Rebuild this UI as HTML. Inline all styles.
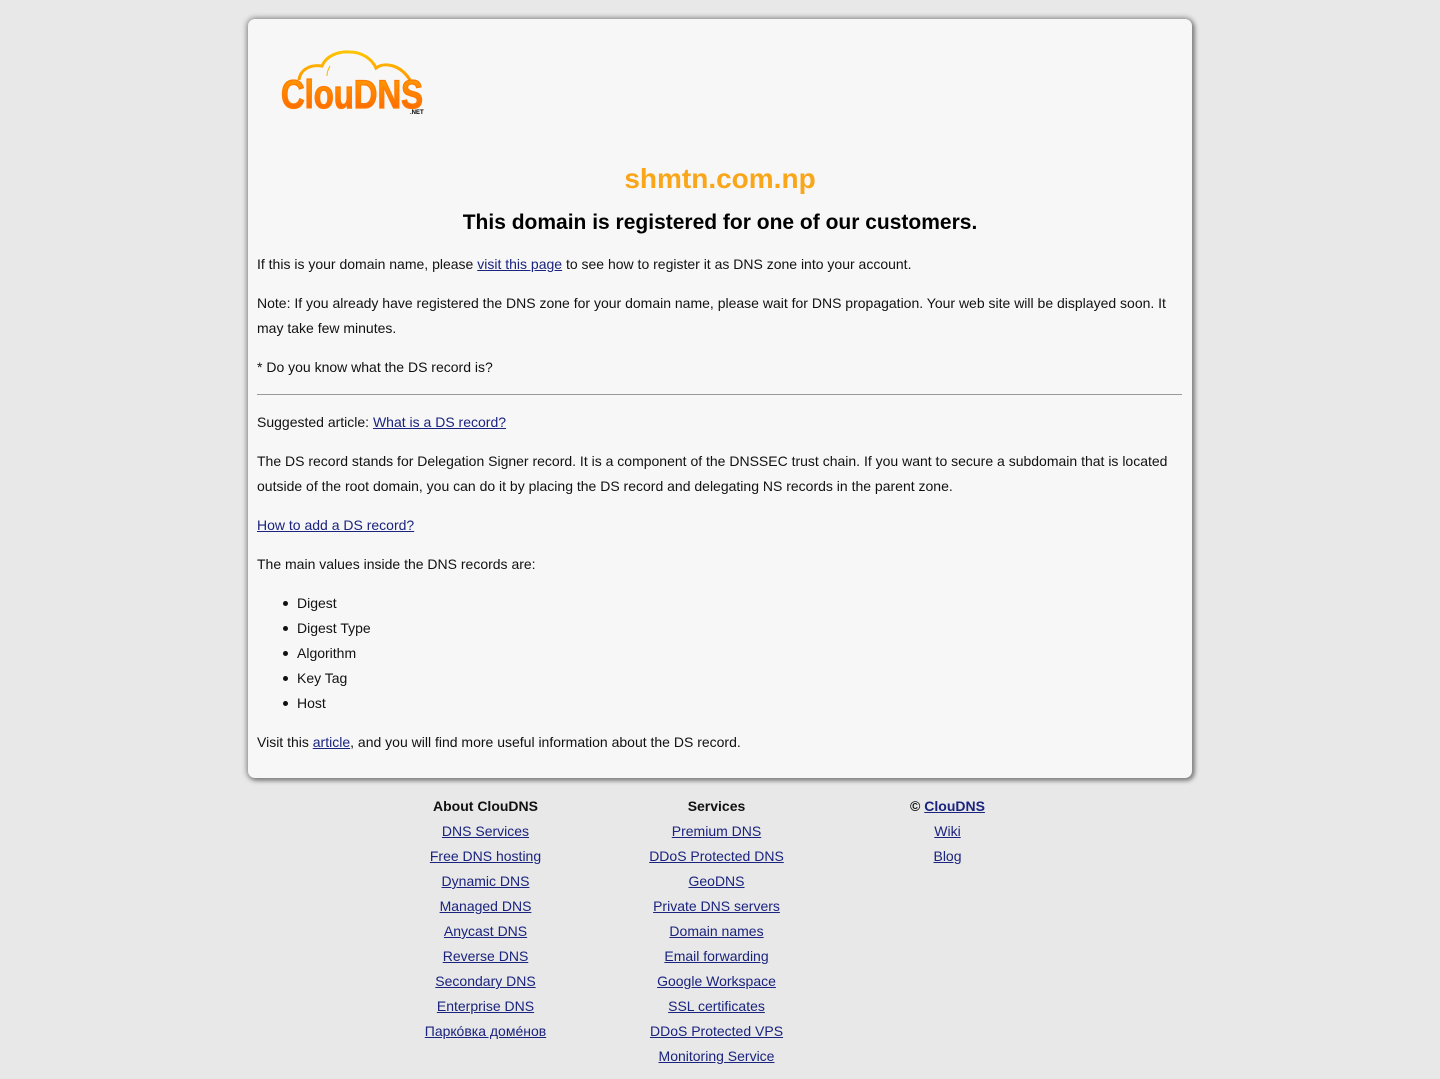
<!DOCTYPE html>
<html><head><meta charset="utf-8"><style>
body{margin:0;background:#e8e8e8;font-family:"Liberation Sans",Arial,sans-serif;font-size:14px;color:#111;width:1440px;height:1079px;position:relative;overflow:hidden}
.box{position:absolute;left:248px;top:19px;width:944px;height:759px;background:#f7f7f7;border-radius:7px;box-shadow:0 0 6px 1px #888,2px 2px 5px #777}
.a{position:absolute;left:257px;line-height:25px;white-space:nowrap}
a{color:#1a237e;text-decoration:underline}
h1{position:absolute;left:248px;width:944px;top:161px;margin:0;text-align:center;font-size:28px;color:#f9a61a;line-height:36px}
h2{position:absolute;left:248px;width:944px;top:209px;margin:0;text-align:center;font-size:21px;line-height:28px;color:#000}
hr{position:absolute;left:257px;top:394px;width:925px;margin:0;border:0;border-top:1px solid #999;height:0}
.li{position:absolute;left:297px;line-height:25px}
.li:before{content:"";position:absolute;left:-14px;top:10px;width:5px;height:5px;border-radius:50%;background:#111}
.col{position:absolute;top:794px;width:231px;text-align:center;line-height:25px}
.col div{height:25px}
</style></head><body>
<div class="box"></div>
<svg style="position:absolute;left:270px;top:40px" width="170" height="85" viewBox="270 40 170 85">
<defs><linearGradient id="g" x1="0" y1="0" x2="0" y2="1"><stop offset="0" stop-color="#ffa000"/><stop offset="1" stop-color="#ff6000"/></linearGradient>
<linearGradient id="c" x1="0" y1="0" x2="0" y2="1"><stop offset="0" stop-color="#ffc400"/><stop offset="1" stop-color="#ff9800"/></linearGradient></defs>
<path d="M299 80 C300 70 310 64 322 66 C326 56 338 51 350 52 C362 52 372 59 376 68 C384 62 400 64 410 80" fill="none" stroke="url(#c)" stroke-width="3"/>
<path d="M330 66 C328 70 327 72 327 76" fill="none" stroke="#ffb000" stroke-width="1"/>
<text x="281" y="108" font-family="Liberation Sans Narrow,Liberation Sans,sans-serif" font-weight="bold" font-size="40" textLength="142" lengthAdjust="spacingAndGlyphs" fill="url(#g)" stroke="#ff7a00" stroke-width="1.2">ClouDNS</text>
<text x="410" y="114" font-family="Liberation Sans,sans-serif" font-weight="bold" font-size="6" fill="#000">.NET</text>
</svg>
<h1>shmtn.com.np</h1>
<h2>This domain is registered for one of our customers.</h2>
<div class="a" style="top:252px">If this is your domain name, please <a href="#">visit this page</a> to see how to register it as DNS zone into your account.</div>
<div class="a" style="top:291px;white-space:normal;width:925px">Note: If you already have registered the DNS zone for your domain name, please wait for DNS propagation. Your web site will be displayed soon. It may take few minutes.</div>
<div class="a" style="top:355px">* Do you know what the DS record is?</div>
<hr>
<div class="a" style="top:410px">Suggested article: <a href="#">What is a DS record?</a></div>
<div class="a" style="top:449px;white-space:normal;width:925px">The DS record stands for Delegation Signer record. It is a component of the DNSSEC trust chain. If you want to secure a subdomain that is located outside of the root domain, you can do it by placing the DS record and delegating NS records in the parent zone.</div>
<div class="a" style="top:513px"><a href="#">How to add a DS record?</a></div>
<div class="a" style="top:552px">The main values inside the DNS records are:</div>
<div class="li" style="top:591px">Digest</div>
<div class="li" style="top:616px">Digest Type</div>
<div class="li" style="top:641px">Algorithm</div>
<div class="li" style="top:666px">Key Tag</div>
<div class="li" style="top:691px">Host</div>
<div class="a" style="top:730px">Visit this <a href="#">article</a>, and you will find more useful information about the DS record.</div>
<div class="col" style="left:370px"><div><b>About ClouDNS</b></div><div><a href="#">DNS Services</a></div><div><a href="#">Free DNS hosting</a></div><div><a href="#">Dynamic DNS</a></div><div><a href="#">Managed DNS</a></div><div><a href="#">Anycast DNS</a></div><div><a href="#">Reverse DNS</a></div><div><a href="#">Secondary DNS</a></div><div><a href="#">Enterprise DNS</a></div><div><a href="#">Паркóвка домéнов</a></div></div>
<div class="col" style="left:601px"><div><b>Services</b></div><div><a href="#">Premium DNS</a></div><div><a href="#">DDoS Protected DNS</a></div><div><a href="#">GeoDNS</a></div><div><a href="#">Private DNS servers</a></div><div><a href="#">Domain names</a></div><div><a href="#">Email forwarding</a></div><div><a href="#">Google Workspace</a></div><div><a href="#">SSL certificates</a></div><div><a href="#">DDoS Protected VPS</a></div><div><a href="#">Monitoring Service</a></div></div>
<div class="col" style="left:832px"><div><b>© <a href="#">ClouDNS</a></b></div><div><a href="#">Wiki</a></div><div><a href="#">Blog</a></div></div>
</body></html>
